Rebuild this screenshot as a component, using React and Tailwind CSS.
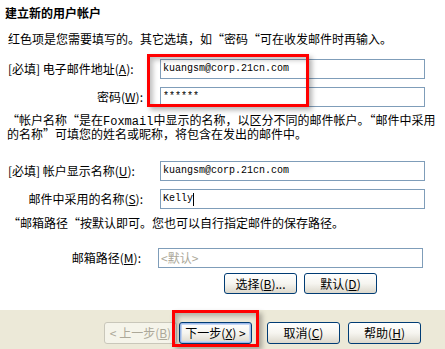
import React from 'react';

const cjk = "font-['Noto_Sans_CJK_SC','Noto_Sans',sans-serif]";
const mono = "font-['Liberation_Mono',monospace] text-[10px]";

const Field = ({ label, right = false, value, disabled, caret, labelW = 'w-[160px]', inputW = 'w-[265px]' }) => (
  <div className="flex items-center h-[20px]">
    <div className={`${labelW} shrink-0 whitespace-nowrap leading-[14px] ${right ? 'text-right pr-[17px]' : 'pl-[8px]'}`}>
      {label}
    </div>
    <div
      className={`${inputW} h-[20px] border border-[#7f9db9] bg-white flex items-center px-[2px] whitespace-nowrap ${
        disabled ? 'text-[#aca899] text-[12px]' : mono + ' text-black'
      }`}
    >
      <span className="leading-[14px]">{value}</span>
      {caret && <span className="inline-block w-px h-[13px] bg-black" />}
    </div>
  </div>
);

const XpButton = ({ children, disabled, primary, w = 'w-[73px]', h = 'h-[22px]' }) => (
  <button
    className={`${w} ${h} rounded-[3px] border text-[12px] leading-[14px] flex items-center justify-center ${
      disabled
        ? 'border-[#c9c7ba] bg-[#f5f4ea] text-[#aca899]'
        : 'border-[#003c74] bg-gradient-to-b from-white via-[#f6f5f0] to-[#dcd8cc] text-black'
    } ${primary ? 'shadow-[inset_0_0_0_1px_#9db9eb,inset_0_0_0_2px_#c5d7f3]' : ''}`}
  >
    {children}
  </button>
);

export default function App() {
  return (
    <div className={`relative w-[445px] h-[349px] overflow-hidden bg-white text-[12px] text-black ${cjk}`}>
      <div className="h-[310px] flex flex-col">
        <h1 className="pl-[5px] pt-[6px] font-bold leading-[14px]">建立新的用户帐户</h1>
        <p className="pl-[8px] mt-[12px] leading-[14px]">红色项是您需要填写的。其它选填，如“密码“可在收发邮件时再输入。</p>

        <div className="mt-[13px] flex flex-col gap-[8px]">
          <Field label={<>[必填] 电子邮件地址(<u>A</u>):</>} value="kuangsm@corp.21cn.com" />
          <Field label={<>密码(<u>W</u>):</>} right value="******" />
        </div>

        <div className="pl-[7px] mt-[6px] flex flex-col">
          <p className="h-[14px] leading-[14px] whitespace-nowrap">
            “帐户名称“是在<span className="font-['Liberation_Mono',monospace] leading-[14px]">Foxmail</span>中显示的名称，以区分不同的邮件帐户。“邮件中采用
          </p>
          <p className="h-[14px] leading-[14px] whitespace-nowrap">的名称”可填您的姓名或昵称，将包含在发出的邮件中。</p>
        </div>

        <div className="mt-[20px] flex flex-col gap-[8px]">
          <Field label={<>[必填] 帐户显示名称(<u>U</u>):</>} value="kuangsm@corp.21cn.com" />
          <Field label={<>邮件中采用的名称(<u>S</u>):</>} right value="Kelly" caret />
        </div>

        <p className="pl-[8px] mt-[7px] leading-[14px]">“邮箱路径“按默认即可。您也可以自行指定邮件的保存路径。</p>

        <div className="mt-[18px]">
          <Field label={<>邮箱路径(<u>M</u>):</>} right value="<默认>" disabled labelW="w-[158px]" />
        </div>

        <div className="mt-[5px] pl-[224px] flex gap-[7px]">
          <XpButton h="h-[21px]">选择(<u>B</u>)...</XpButton>
          <XpButton h="h-[21px]">默认(<u>D</u>)</XpButton>
        </div>
      </div>

      <div className="h-[39px] bg-[#ece9d8] flex items-start pt-[12px] pl-[104px]">
        <XpButton disabled>&lt; 上一步(<u>B</u>)</XpButton>
        <div className="ml-[2px]">
          <XpButton primary>下一步(<u>X</u>) &gt;</XpButton>
        </div>
        <div className="ml-[15px]">
          <XpButton>取消(<u>C</u>)</XpButton>
        </div>
        <div className="ml-[8px]">
          <XpButton>帮助(<u>H</u>)</XpButton>
        </div>
      </div>

      {/* red annotation boxes */}
      <div className="absolute left-[147px] top-[54px] w-[162px] h-[53px] border-[3px] border-[#ff0000] shadow-[3px_3px_5px_rgba(0,0,0,0.3),inset_3px_3px_5px_rgba(0,0,0,0.25)]" />
      <div className="absolute left-[172px] top-[310px] w-[87px] h-[37px] border-[3px] border-[#ff0000] shadow-[3px_3px_5px_rgba(0,0,0,0.3),inset_3px_3px_5px_rgba(0,0,0,0.25)]" />
    </div>
  );
}
